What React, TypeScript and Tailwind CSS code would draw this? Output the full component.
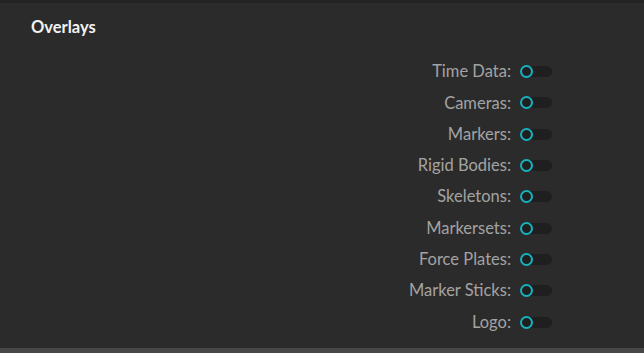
const items = [
  'Time Data',
  'Cameras',
  'Markers',
  'Rigid Bodies',
  'Skeletons',
  'Markersets',
  'Force Plates',
  'Marker Sticks',
  'Logo',
];

function Toggle() {
  return (
    <div className="relative h-[11px] w-[32px] rounded-full bg-[#1f1f1f]">
      <div className="absolute left-0 top-[-1px] h-[13px] w-[13px] rounded-full border-2 border-[#17b2c0] bg-[#1f1f1f]" />
    </div>
  );
}

export default function App() {
  return (
    <div
      className="flex h-[353px] w-[644px] flex-col bg-[#2b2b2b]"
      style={{ fontFamily: 'Lato, "Open Sans", sans-serif' }}
    >
      {/* top edge */}
      <div className="h-[3px] bg-[#232323]" />

      <div className="flex-1">
        <h2 className="pl-[31px] pt-[14px] text-[16.5px] font-bold leading-[20px] text-[#f2f2f2]">
          Overlays
        </h2>

        <div className="mt-[19px] flex flex-col pr-[92px]">
          {items.map((label) => (
            <div key={label} className="flex h-[31.3px] items-center justify-end gap-[9px]">
              <span className="text-[16.5px] text-[#a3a3a3]">{label}:</span>
              <Toggle />
            </div>
          ))}
        </div>
      </div>

      {/* bottom band */}
      <div className="h-[5px] bg-[#474747]" />
    </div>
  );
}
